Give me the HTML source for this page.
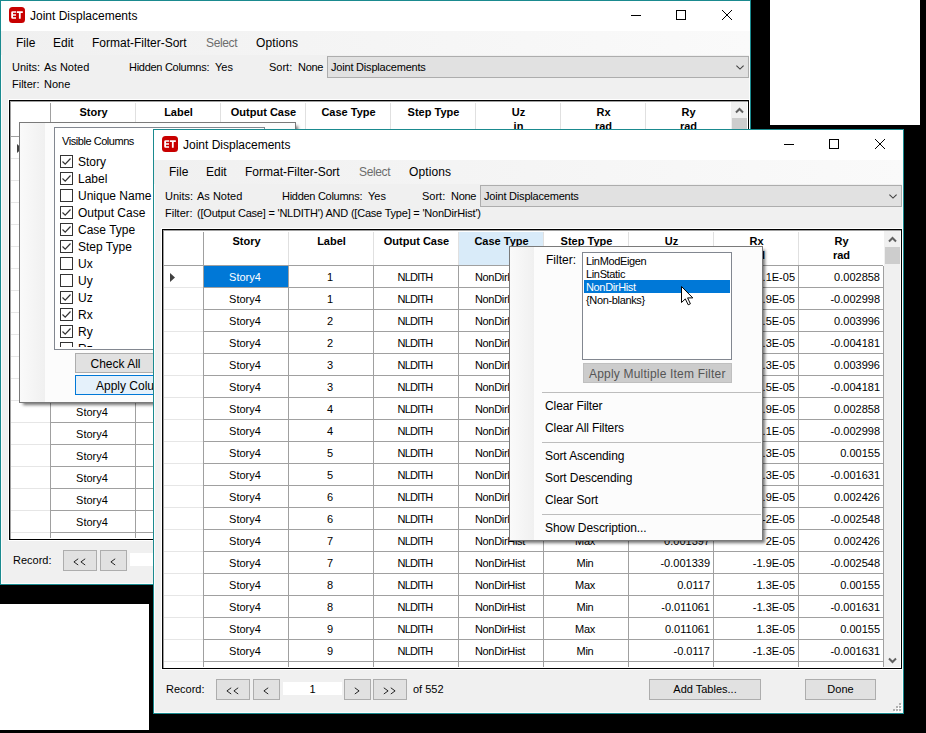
<!DOCTYPE html><html><head><meta charset="utf-8"><style>html,body{margin:0;padding:0;width:926px;height:733px;overflow:hidden;background:#000}body>div,body>svg{position:absolute}body{font-family:"Liberation Sans",sans-serif;position:relative}</style></head><body>
<div style="left:770px;top:0px;width:150px;height:125px;background:#fff"></div>
<div style="left:0px;top:604px;width:149px;height:126px;background:#fff"></div>
<div style="left:0px;top:0px;width:751px;height:585px;box-sizing:border-box;border:1px solid #1a8a8f;background:#f0f0f0"></div>
<div style="left:1px;top:1px;width:1px;height:583px;background:#fcfcfc"></div>
<div style="left:749px;top:1px;width:1px;height:583px;background:#fcfcfc"></div>
<div style="left:1px;top:583px;width:749px;height:1px;background:#fcfcfc"></div>
<div style="left:1px;top:1px;width:749px;height:30px;background:#fff"></div>
<svg style="left:9px;top:7px" width="16" height="16" viewBox="0 0 16 16"><rect x="0" y="0" width="16" height="16" rx="3.5" fill="#c80000"/><path d="M7 4.2H3.6Q2.2 4.2 2.2 5.6V10.4Q2.2 11.8 3.6 11.8H7V10.2H4V8.8H7V7.3H4V5.8H7Z" fill="#fff"/><path d="M7.8 4.2H13.8V5.9H11.7V11.8H9.9V5.9H7.8Z" fill="#fff"/></svg>
<div style="top:6px;font-size:12px;line-height:20px;color:#000;white-space:pre;left:30px;">Joint Displacements</div>
<div style="left:631px;top:15px;width:10px;height:1px;background:#000"></div>
<div style="left:676px;top:10px;width:8px;height:8px;border:1px solid #000"></div>
<svg style="left:721px;top:9px" width="12" height="12" viewBox="0 0 12 12"><path d="M1 1L11 11M11 1L1 11" stroke="#000" stroke-width="1"/></svg>
<div style="left:1px;top:31px;width:749px;height:24px;background:linear-gradient(to right,#f0f0f0,#fafafa)"></div>
<div style="top:33px;font-size:12px;line-height:20px;color:#000;white-space:pre;left:16px;">File</div>
<div style="top:33px;font-size:12px;line-height:20px;color:#000;white-space:pre;left:53px;">Edit</div>
<div style="top:33px;font-size:12px;line-height:20px;color:#000;white-space:pre;left:92px;">Format-Filter-Sort</div>
<div style="top:33px;font-size:12px;line-height:20px;color:#6d6d6d;white-space:pre;letter-spacing:-0.35px;left:206px;">Select</div>
<div style="top:33px;font-size:12px;line-height:20px;color:#000;white-space:pre;letter-spacing:0.1px;left:256px;">Options</div>
<div style="top:57px;font-size:11px;line-height:20px;color:#000;white-space:pre;left:12px;">Units:</div>
<div style="top:57px;font-size:11px;line-height:20px;color:#000;white-space:pre;left:44px;">As Noted</div>
<div style="top:57px;font-size:11px;line-height:20px;color:#000;white-space:pre;letter-spacing:-0.28px;left:129px;">Hidden Columns:</div>
<div style="top:57px;font-size:11px;line-height:20px;color:#000;white-space:pre;left:215px;">Yes</div>
<div style="top:57px;font-size:11px;line-height:20px;color:#000;white-space:pre;left:269px;">Sort:</div>
<div style="top:57px;font-size:11px;line-height:20px;color:#000;white-space:pre;letter-spacing:-0.3px;left:298px;">None</div>
<div style="left:327px;top:56px;width:422px;height:22px;box-sizing:border-box;border:1px solid #adadad;background:#e1e1e1"></div>
<div style="top:57px;font-size:11px;line-height:20px;color:#000;white-space:pre;letter-spacing:-0.2px;left:331px;">Joint Displacements</div>
<svg style="left:736px;top:65px" width="8" height="5" viewBox="0 0 8 5"><path d="M0.4 0.6L4 4.1L7.6 0.6" fill="none" stroke="#404040" stroke-width="1.1"/></svg>
<div style="top:74px;font-size:11px;line-height:20px;color:#000;white-space:pre;left:12px;">Filter:</div>
<div style="top:74px;font-size:11px;line-height:20px;color:#000;white-space:pre;left:44px;">None</div>
<div style="left:8px;top:99px;width:742px;height:442px;background:#fff"></div>
<div style="left:9px;top:100px;width:740px;height:440px;box-sizing:border-box;border:1px solid #000;background:#fff"></div>
<div style="left:10px;top:101px;width:738px;height:1px;background:#a0a0a0"></div>
<div style="left:10px;top:101px;width:1px;height:438px;background:#a0a0a0"></div>
<div style="left:50px;top:103px;width:1px;height:33px;background:#a0a0a0"></div>
<div style="left:135px;top:103px;width:1px;height:33px;background:#e0e0e0"></div>
<div style="left:220px;top:103px;width:1px;height:33px;background:#e0e0e0"></div>
<div style="left:305px;top:103px;width:1px;height:33px;background:#e0e0e0"></div>
<div style="left:390px;top:103px;width:1px;height:33px;background:#e0e0e0"></div>
<div style="left:475px;top:103px;width:1px;height:33px;background:#e0e0e0"></div>
<div style="left:560px;top:103px;width:1px;height:33px;background:#e0e0e0"></div>
<div style="left:645px;top:103px;width:1px;height:33px;background:#e0e0e0"></div>
<div style="left:730px;top:103px;width:1px;height:33px;background:#e0e0e0"></div>
<div style="left:10px;top:136px;width:720px;height:1px;background:#a0a0a0"></div>
<div style="top:102px;font-size:11px;line-height:20px;color:#000;white-space:pre;font-weight:bold;left:51.5px;width:84px;text-align:center;">Story</div>
<div style="top:102px;font-size:11px;line-height:20px;color:#000;white-space:pre;font-weight:bold;left:136.5px;width:84px;text-align:center;">Label</div>
<div style="top:102px;font-size:11px;line-height:20px;color:#000;white-space:pre;font-weight:bold;left:221.5px;width:84px;text-align:center;">Output Case</div>
<div style="top:102px;font-size:11px;line-height:20px;color:#000;white-space:pre;font-weight:bold;left:306.5px;width:84px;text-align:center;">Case Type</div>
<div style="top:102px;font-size:11px;line-height:20px;color:#000;white-space:pre;font-weight:bold;left:391.5px;width:84px;text-align:center;">Step Type</div>
<div style="top:102px;font-size:11px;line-height:20px;color:#000;white-space:pre;font-weight:bold;left:476.5px;width:84px;text-align:center;">Uz</div>
<div style="top:116px;font-size:11px;line-height:20px;color:#000;white-space:pre;font-weight:bold;left:476.5px;width:84px;text-align:center;">in</div>
<div style="top:102px;font-size:11px;line-height:20px;color:#000;white-space:pre;font-weight:bold;left:561.5px;width:84px;text-align:center;">Rx</div>
<div style="top:116px;font-size:11px;line-height:20px;color:#000;white-space:pre;font-weight:bold;left:561.5px;width:84px;text-align:center;">rad</div>
<div style="top:102px;font-size:11px;line-height:20px;color:#000;white-space:pre;font-weight:bold;left:646.5px;width:84px;text-align:center;">Ry</div>
<div style="top:116px;font-size:11px;line-height:20px;color:#000;white-space:pre;font-weight:bold;left:646.5px;width:84px;text-align:center;">rad</div>
<div style="left:11px;top:158px;width:39px;height:1px;background:#e6e6e6"></div>
<div style="left:51px;top:158px;width:679px;height:1px;background:#a0a0a0"></div>
<div style="left:11px;top:180px;width:39px;height:1px;background:#e6e6e6"></div>
<div style="left:51px;top:180px;width:679px;height:1px;background:#a0a0a0"></div>
<div style="left:11px;top:202px;width:39px;height:1px;background:#e6e6e6"></div>
<div style="left:51px;top:202px;width:679px;height:1px;background:#a0a0a0"></div>
<div style="left:11px;top:224px;width:39px;height:1px;background:#e6e6e6"></div>
<div style="left:51px;top:224px;width:679px;height:1px;background:#a0a0a0"></div>
<div style="left:11px;top:246px;width:39px;height:1px;background:#e6e6e6"></div>
<div style="left:51px;top:246px;width:679px;height:1px;background:#a0a0a0"></div>
<div style="left:11px;top:268px;width:39px;height:1px;background:#e6e6e6"></div>
<div style="left:51px;top:268px;width:679px;height:1px;background:#a0a0a0"></div>
<div style="left:11px;top:290px;width:39px;height:1px;background:#e6e6e6"></div>
<div style="left:51px;top:290px;width:679px;height:1px;background:#a0a0a0"></div>
<div style="left:11px;top:312px;width:39px;height:1px;background:#e6e6e6"></div>
<div style="left:51px;top:312px;width:679px;height:1px;background:#a0a0a0"></div>
<div style="left:11px;top:334px;width:39px;height:1px;background:#e6e6e6"></div>
<div style="left:51px;top:334px;width:679px;height:1px;background:#a0a0a0"></div>
<div style="left:11px;top:356px;width:39px;height:1px;background:#e6e6e6"></div>
<div style="left:51px;top:356px;width:679px;height:1px;background:#a0a0a0"></div>
<div style="left:11px;top:378px;width:39px;height:1px;background:#e6e6e6"></div>
<div style="left:51px;top:378px;width:679px;height:1px;background:#a0a0a0"></div>
<div style="left:11px;top:400px;width:39px;height:1px;background:#e6e6e6"></div>
<div style="left:51px;top:400px;width:679px;height:1px;background:#a0a0a0"></div>
<div style="left:11px;top:422px;width:39px;height:1px;background:#e6e6e6"></div>
<div style="left:51px;top:422px;width:679px;height:1px;background:#a0a0a0"></div>
<div style="left:11px;top:444px;width:39px;height:1px;background:#e6e6e6"></div>
<div style="left:51px;top:444px;width:679px;height:1px;background:#a0a0a0"></div>
<div style="left:11px;top:466px;width:39px;height:1px;background:#e6e6e6"></div>
<div style="left:51px;top:466px;width:679px;height:1px;background:#a0a0a0"></div>
<div style="left:11px;top:488px;width:39px;height:1px;background:#e6e6e6"></div>
<div style="left:51px;top:488px;width:679px;height:1px;background:#a0a0a0"></div>
<div style="left:11px;top:510px;width:39px;height:1px;background:#e6e6e6"></div>
<div style="left:51px;top:510px;width:679px;height:1px;background:#a0a0a0"></div>
<div style="left:11px;top:532px;width:39px;height:1px;background:#e6e6e6"></div>
<div style="left:51px;top:532px;width:679px;height:1px;background:#a0a0a0"></div>
<div style="left:50px;top:137px;width:1px;height:401px;background:#a0a0a0"></div>
<div style="left:135px;top:137px;width:1px;height:401px;background:#a0a0a0"></div>
<div style="left:220px;top:137px;width:1px;height:401px;background:#a0a0a0"></div>
<div style="left:305px;top:137px;width:1px;height:401px;background:#a0a0a0"></div>
<div style="left:390px;top:137px;width:1px;height:401px;background:#a0a0a0"></div>
<div style="left:475px;top:137px;width:1px;height:401px;background:#a0a0a0"></div>
<div style="left:560px;top:137px;width:1px;height:401px;background:#a0a0a0"></div>
<div style="left:645px;top:137px;width:1px;height:401px;background:#a0a0a0"></div>
<div style="left:730px;top:137px;width:1px;height:401px;background:#a0a0a0"></div>
<div style="left:731px;top:102px;width:16px;height:436px;background:#f0f0f0"></div>
<div style="left:730px;top:102px;width:1px;height:34px;background:#fff"></div>
<div style="left:732px;top:118px;width:15px;height:17px;background:#cdcdcd"></div>
<svg style="left:735px;top:107px" width="9" height="7" viewBox="0 0 9 7"><path d="M1 5.5L4.5 2L8 5.5" fill="none" stroke="#606060" stroke-width="2"/></svg>
<svg style="left:735px;top:528px" width="9" height="7" viewBox="0 0 9 7"><path d="M1 1.5L4.5 5L8 1.5" fill="none" stroke="#606060" stroke-width="2"/></svg>
<svg style="left:17px;top:144px" width="6" height="10" viewBox="0 0 6 10"><path d="M0 0L5 4.5L0 9Z" fill="#404040"/></svg>
<div style="top:138px;font-size:11px;line-height:20px;color:#000;white-space:pre;left:50.0px;width:84px;text-align:center;">Story4</div>
<div style="top:138px;font-size:11px;line-height:20px;color:#000;white-space:pre;left:135.0px;width:84px;text-align:center;">1</div>
<div style="top:138px;font-size:11px;line-height:20px;color:#000;white-space:pre;letter-spacing:-0.8px;left:220.0px;width:84px;text-align:center;">NLDITH</div>
<div style="top:138px;font-size:11px;line-height:20px;color:#000;white-space:pre;letter-spacing:-0.3px;left:305.0px;width:84px;text-align:center;">NonDirHist</div>
<div style="top:138px;font-size:11px;line-height:20px;color:#000;white-space:pre;letter-spacing:-0.3px;left:390.0px;width:84px;text-align:center;">Max</div>
<div style="top:138px;font-size:11px;line-height:20px;color:#000;white-space:pre;left:473px;width:84px;text-align:right;">0.001397</div>
<div style="top:138px;font-size:11px;line-height:20px;color:#000;white-space:pre;left:558px;width:84px;text-align:right;">1.1E-05</div>
<div style="top:138px;font-size:11px;line-height:20px;color:#000;white-space:pre;left:643px;width:84px;text-align:right;">0.002858</div>
<div style="top:160px;font-size:11px;line-height:20px;color:#000;white-space:pre;left:50.0px;width:84px;text-align:center;">Story4</div>
<div style="top:160px;font-size:11px;line-height:20px;color:#000;white-space:pre;left:135.0px;width:84px;text-align:center;">1</div>
<div style="top:160px;font-size:11px;line-height:20px;color:#000;white-space:pre;letter-spacing:-0.8px;left:220.0px;width:84px;text-align:center;">NLDITH</div>
<div style="top:160px;font-size:11px;line-height:20px;color:#000;white-space:pre;letter-spacing:-0.3px;left:305.0px;width:84px;text-align:center;">NonDirHist</div>
<div style="top:160px;font-size:11px;line-height:20px;color:#000;white-space:pre;letter-spacing:-0.3px;left:390.0px;width:84px;text-align:center;">Min</div>
<div style="top:160px;font-size:11px;line-height:20px;color:#000;white-space:pre;left:473px;width:84px;text-align:right;">-0.001339</div>
<div style="top:160px;font-size:11px;line-height:20px;color:#000;white-space:pre;left:558px;width:84px;text-align:right;">-1.9E-05</div>
<div style="top:160px;font-size:11px;line-height:20px;color:#000;white-space:pre;left:643px;width:84px;text-align:right;">-0.002998</div>
<div style="top:182px;font-size:11px;line-height:20px;color:#000;white-space:pre;left:50.0px;width:84px;text-align:center;">Story4</div>
<div style="top:182px;font-size:11px;line-height:20px;color:#000;white-space:pre;left:135.0px;width:84px;text-align:center;">2</div>
<div style="top:182px;font-size:11px;line-height:20px;color:#000;white-space:pre;letter-spacing:-0.8px;left:220.0px;width:84px;text-align:center;">NLDITH</div>
<div style="top:182px;font-size:11px;line-height:20px;color:#000;white-space:pre;letter-spacing:-0.3px;left:305.0px;width:84px;text-align:center;">NonDirHist</div>
<div style="top:182px;font-size:11px;line-height:20px;color:#000;white-space:pre;letter-spacing:-0.3px;left:390.0px;width:84px;text-align:center;">Max</div>
<div style="top:182px;font-size:11px;line-height:20px;color:#000;white-space:pre;left:473px;width:84px;text-align:right;">0.003996</div>
<div style="top:182px;font-size:11px;line-height:20px;color:#000;white-space:pre;left:558px;width:84px;text-align:right;">1.5E-05</div>
<div style="top:182px;font-size:11px;line-height:20px;color:#000;white-space:pre;left:643px;width:84px;text-align:right;">0.003996</div>
<div style="top:204px;font-size:11px;line-height:20px;color:#000;white-space:pre;left:50.0px;width:84px;text-align:center;">Story4</div>
<div style="top:204px;font-size:11px;line-height:20px;color:#000;white-space:pre;left:135.0px;width:84px;text-align:center;">2</div>
<div style="top:204px;font-size:11px;line-height:20px;color:#000;white-space:pre;letter-spacing:-0.8px;left:220.0px;width:84px;text-align:center;">NLDITH</div>
<div style="top:204px;font-size:11px;line-height:20px;color:#000;white-space:pre;letter-spacing:-0.3px;left:305.0px;width:84px;text-align:center;">NonDirHist</div>
<div style="top:204px;font-size:11px;line-height:20px;color:#000;white-space:pre;letter-spacing:-0.3px;left:390.0px;width:84px;text-align:center;">Min</div>
<div style="top:204px;font-size:11px;line-height:20px;color:#000;white-space:pre;left:473px;width:84px;text-align:right;">-0.004181</div>
<div style="top:204px;font-size:11px;line-height:20px;color:#000;white-space:pre;left:558px;width:84px;text-align:right;">-1.3E-05</div>
<div style="top:204px;font-size:11px;line-height:20px;color:#000;white-space:pre;left:643px;width:84px;text-align:right;">-0.004181</div>
<div style="top:226px;font-size:11px;line-height:20px;color:#000;white-space:pre;left:50.0px;width:84px;text-align:center;">Story4</div>
<div style="top:226px;font-size:11px;line-height:20px;color:#000;white-space:pre;left:135.0px;width:84px;text-align:center;">3</div>
<div style="top:226px;font-size:11px;line-height:20px;color:#000;white-space:pre;letter-spacing:-0.8px;left:220.0px;width:84px;text-align:center;">NLDITH</div>
<div style="top:226px;font-size:11px;line-height:20px;color:#000;white-space:pre;letter-spacing:-0.3px;left:305.0px;width:84px;text-align:center;">NonDirHist</div>
<div style="top:226px;font-size:11px;line-height:20px;color:#000;white-space:pre;letter-spacing:-0.3px;left:390.0px;width:84px;text-align:center;">Max</div>
<div style="top:226px;font-size:11px;line-height:20px;color:#000;white-space:pre;left:473px;width:84px;text-align:right;">0.003996</div>
<div style="top:226px;font-size:11px;line-height:20px;color:#000;white-space:pre;left:558px;width:84px;text-align:right;">1.3E-05</div>
<div style="top:226px;font-size:11px;line-height:20px;color:#000;white-space:pre;left:643px;width:84px;text-align:right;">0.003996</div>
<div style="top:248px;font-size:11px;line-height:20px;color:#000;white-space:pre;left:50.0px;width:84px;text-align:center;">Story4</div>
<div style="top:248px;font-size:11px;line-height:20px;color:#000;white-space:pre;left:135.0px;width:84px;text-align:center;">3</div>
<div style="top:248px;font-size:11px;line-height:20px;color:#000;white-space:pre;letter-spacing:-0.8px;left:220.0px;width:84px;text-align:center;">NLDITH</div>
<div style="top:248px;font-size:11px;line-height:20px;color:#000;white-space:pre;letter-spacing:-0.3px;left:305.0px;width:84px;text-align:center;">NonDirHist</div>
<div style="top:248px;font-size:11px;line-height:20px;color:#000;white-space:pre;letter-spacing:-0.3px;left:390.0px;width:84px;text-align:center;">Min</div>
<div style="top:248px;font-size:11px;line-height:20px;color:#000;white-space:pre;left:473px;width:84px;text-align:right;">-0.004181</div>
<div style="top:248px;font-size:11px;line-height:20px;color:#000;white-space:pre;left:558px;width:84px;text-align:right;">-1.5E-05</div>
<div style="top:248px;font-size:11px;line-height:20px;color:#000;white-space:pre;left:643px;width:84px;text-align:right;">-0.004181</div>
<div style="top:270px;font-size:11px;line-height:20px;color:#000;white-space:pre;left:50.0px;width:84px;text-align:center;">Story4</div>
<div style="top:270px;font-size:11px;line-height:20px;color:#000;white-space:pre;left:135.0px;width:84px;text-align:center;">4</div>
<div style="top:270px;font-size:11px;line-height:20px;color:#000;white-space:pre;letter-spacing:-0.8px;left:220.0px;width:84px;text-align:center;">NLDITH</div>
<div style="top:270px;font-size:11px;line-height:20px;color:#000;white-space:pre;letter-spacing:-0.3px;left:305.0px;width:84px;text-align:center;">NonDirHist</div>
<div style="top:270px;font-size:11px;line-height:20px;color:#000;white-space:pre;letter-spacing:-0.3px;left:390.0px;width:84px;text-align:center;">Max</div>
<div style="top:270px;font-size:11px;line-height:20px;color:#000;white-space:pre;left:473px;width:84px;text-align:right;">0.002858</div>
<div style="top:270px;font-size:11px;line-height:20px;color:#000;white-space:pre;left:558px;width:84px;text-align:right;">1.9E-05</div>
<div style="top:270px;font-size:11px;line-height:20px;color:#000;white-space:pre;left:643px;width:84px;text-align:right;">0.002858</div>
<div style="top:292px;font-size:11px;line-height:20px;color:#000;white-space:pre;left:50.0px;width:84px;text-align:center;">Story4</div>
<div style="top:292px;font-size:11px;line-height:20px;color:#000;white-space:pre;left:135.0px;width:84px;text-align:center;">4</div>
<div style="top:292px;font-size:11px;line-height:20px;color:#000;white-space:pre;letter-spacing:-0.8px;left:220.0px;width:84px;text-align:center;">NLDITH</div>
<div style="top:292px;font-size:11px;line-height:20px;color:#000;white-space:pre;letter-spacing:-0.3px;left:305.0px;width:84px;text-align:center;">NonDirHist</div>
<div style="top:292px;font-size:11px;line-height:20px;color:#000;white-space:pre;letter-spacing:-0.3px;left:390.0px;width:84px;text-align:center;">Min</div>
<div style="top:292px;font-size:11px;line-height:20px;color:#000;white-space:pre;left:473px;width:84px;text-align:right;">-0.002998</div>
<div style="top:292px;font-size:11px;line-height:20px;color:#000;white-space:pre;left:558px;width:84px;text-align:right;">-1.1E-05</div>
<div style="top:292px;font-size:11px;line-height:20px;color:#000;white-space:pre;left:643px;width:84px;text-align:right;">-0.002998</div>
<div style="top:314px;font-size:11px;line-height:20px;color:#000;white-space:pre;left:50.0px;width:84px;text-align:center;">Story4</div>
<div style="top:314px;font-size:11px;line-height:20px;color:#000;white-space:pre;left:135.0px;width:84px;text-align:center;">5</div>
<div style="top:314px;font-size:11px;line-height:20px;color:#000;white-space:pre;letter-spacing:-0.8px;left:220.0px;width:84px;text-align:center;">NLDITH</div>
<div style="top:314px;font-size:11px;line-height:20px;color:#000;white-space:pre;letter-spacing:-0.3px;left:305.0px;width:84px;text-align:center;">NonDirHist</div>
<div style="top:314px;font-size:11px;line-height:20px;color:#000;white-space:pre;letter-spacing:-0.3px;left:390.0px;width:84px;text-align:center;">Max</div>
<div style="top:314px;font-size:11px;line-height:20px;color:#000;white-space:pre;left:473px;width:84px;text-align:right;">0.00155</div>
<div style="top:314px;font-size:11px;line-height:20px;color:#000;white-space:pre;left:558px;width:84px;text-align:right;">1.3E-05</div>
<div style="top:314px;font-size:11px;line-height:20px;color:#000;white-space:pre;left:643px;width:84px;text-align:right;">0.00155</div>
<div style="top:336px;font-size:11px;line-height:20px;color:#000;white-space:pre;left:50.0px;width:84px;text-align:center;">Story4</div>
<div style="top:336px;font-size:11px;line-height:20px;color:#000;white-space:pre;left:135.0px;width:84px;text-align:center;">5</div>
<div style="top:336px;font-size:11px;line-height:20px;color:#000;white-space:pre;letter-spacing:-0.8px;left:220.0px;width:84px;text-align:center;">NLDITH</div>
<div style="top:336px;font-size:11px;line-height:20px;color:#000;white-space:pre;letter-spacing:-0.3px;left:305.0px;width:84px;text-align:center;">NonDirHist</div>
<div style="top:336px;font-size:11px;line-height:20px;color:#000;white-space:pre;letter-spacing:-0.3px;left:390.0px;width:84px;text-align:center;">Min</div>
<div style="top:336px;font-size:11px;line-height:20px;color:#000;white-space:pre;left:473px;width:84px;text-align:right;">-0.001631</div>
<div style="top:336px;font-size:11px;line-height:20px;color:#000;white-space:pre;left:558px;width:84px;text-align:right;">-1.3E-05</div>
<div style="top:336px;font-size:11px;line-height:20px;color:#000;white-space:pre;left:643px;width:84px;text-align:right;">-0.001631</div>
<div style="top:358px;font-size:11px;line-height:20px;color:#000;white-space:pre;left:50.0px;width:84px;text-align:center;">Story4</div>
<div style="top:358px;font-size:11px;line-height:20px;color:#000;white-space:pre;left:135.0px;width:84px;text-align:center;">6</div>
<div style="top:358px;font-size:11px;line-height:20px;color:#000;white-space:pre;letter-spacing:-0.8px;left:220.0px;width:84px;text-align:center;">NLDITH</div>
<div style="top:358px;font-size:11px;line-height:20px;color:#000;white-space:pre;letter-spacing:-0.3px;left:305.0px;width:84px;text-align:center;">NonDirHist</div>
<div style="top:358px;font-size:11px;line-height:20px;color:#000;white-space:pre;letter-spacing:-0.3px;left:390.0px;width:84px;text-align:center;">Max</div>
<div style="top:358px;font-size:11px;line-height:20px;color:#000;white-space:pre;left:473px;width:84px;text-align:right;">0.002426</div>
<div style="top:358px;font-size:11px;line-height:20px;color:#000;white-space:pre;left:558px;width:84px;text-align:right;">1.9E-05</div>
<div style="top:358px;font-size:11px;line-height:20px;color:#000;white-space:pre;left:643px;width:84px;text-align:right;">0.002426</div>
<div style="top:380px;font-size:11px;line-height:20px;color:#000;white-space:pre;left:50.0px;width:84px;text-align:center;">Story4</div>
<div style="top:380px;font-size:11px;line-height:20px;color:#000;white-space:pre;left:135.0px;width:84px;text-align:center;">6</div>
<div style="top:380px;font-size:11px;line-height:20px;color:#000;white-space:pre;letter-spacing:-0.8px;left:220.0px;width:84px;text-align:center;">NLDITH</div>
<div style="top:380px;font-size:11px;line-height:20px;color:#000;white-space:pre;letter-spacing:-0.3px;left:305.0px;width:84px;text-align:center;">NonDirHist</div>
<div style="top:380px;font-size:11px;line-height:20px;color:#000;white-space:pre;letter-spacing:-0.3px;left:390.0px;width:84px;text-align:center;">Min</div>
<div style="top:380px;font-size:11px;line-height:20px;color:#000;white-space:pre;left:473px;width:84px;text-align:right;">-0.002548</div>
<div style="top:380px;font-size:11px;line-height:20px;color:#000;white-space:pre;left:558px;width:84px;text-align:right;">-2E-05</div>
<div style="top:380px;font-size:11px;line-height:20px;color:#000;white-space:pre;left:643px;width:84px;text-align:right;">-0.002548</div>
<div style="top:402px;font-size:11px;line-height:20px;color:#000;white-space:pre;left:50.0px;width:84px;text-align:center;">Story4</div>
<div style="top:402px;font-size:11px;line-height:20px;color:#000;white-space:pre;left:135.0px;width:84px;text-align:center;">7</div>
<div style="top:402px;font-size:11px;line-height:20px;color:#000;white-space:pre;letter-spacing:-0.8px;left:220.0px;width:84px;text-align:center;">NLDITH</div>
<div style="top:402px;font-size:11px;line-height:20px;color:#000;white-space:pre;letter-spacing:-0.3px;left:305.0px;width:84px;text-align:center;">NonDirHist</div>
<div style="top:402px;font-size:11px;line-height:20px;color:#000;white-space:pre;letter-spacing:-0.3px;left:390.0px;width:84px;text-align:center;">Max</div>
<div style="top:402px;font-size:11px;line-height:20px;color:#000;white-space:pre;left:473px;width:84px;text-align:right;">0.001397</div>
<div style="top:402px;font-size:11px;line-height:20px;color:#000;white-space:pre;left:558px;width:84px;text-align:right;">2E-05</div>
<div style="top:402px;font-size:11px;line-height:20px;color:#000;white-space:pre;left:643px;width:84px;text-align:right;">0.002426</div>
<div style="top:424px;font-size:11px;line-height:20px;color:#000;white-space:pre;left:50.0px;width:84px;text-align:center;">Story4</div>
<div style="top:424px;font-size:11px;line-height:20px;color:#000;white-space:pre;left:135.0px;width:84px;text-align:center;">7</div>
<div style="top:424px;font-size:11px;line-height:20px;color:#000;white-space:pre;letter-spacing:-0.8px;left:220.0px;width:84px;text-align:center;">NLDITH</div>
<div style="top:424px;font-size:11px;line-height:20px;color:#000;white-space:pre;letter-spacing:-0.3px;left:305.0px;width:84px;text-align:center;">NonDirHist</div>
<div style="top:424px;font-size:11px;line-height:20px;color:#000;white-space:pre;letter-spacing:-0.3px;left:390.0px;width:84px;text-align:center;">Min</div>
<div style="top:424px;font-size:11px;line-height:20px;color:#000;white-space:pre;left:473px;width:84px;text-align:right;">-0.001339</div>
<div style="top:424px;font-size:11px;line-height:20px;color:#000;white-space:pre;left:558px;width:84px;text-align:right;">-1.9E-05</div>
<div style="top:424px;font-size:11px;line-height:20px;color:#000;white-space:pre;left:643px;width:84px;text-align:right;">-0.002548</div>
<div style="top:446px;font-size:11px;line-height:20px;color:#000;white-space:pre;left:50.0px;width:84px;text-align:center;">Story4</div>
<div style="top:446px;font-size:11px;line-height:20px;color:#000;white-space:pre;left:135.0px;width:84px;text-align:center;">8</div>
<div style="top:446px;font-size:11px;line-height:20px;color:#000;white-space:pre;letter-spacing:-0.8px;left:220.0px;width:84px;text-align:center;">NLDITH</div>
<div style="top:446px;font-size:11px;line-height:20px;color:#000;white-space:pre;letter-spacing:-0.3px;left:305.0px;width:84px;text-align:center;">NonDirHist</div>
<div style="top:446px;font-size:11px;line-height:20px;color:#000;white-space:pre;letter-spacing:-0.3px;left:390.0px;width:84px;text-align:center;">Max</div>
<div style="top:446px;font-size:11px;line-height:20px;color:#000;white-space:pre;left:473px;width:84px;text-align:right;">0.0117</div>
<div style="top:446px;font-size:11px;line-height:20px;color:#000;white-space:pre;left:558px;width:84px;text-align:right;">1.3E-05</div>
<div style="top:446px;font-size:11px;line-height:20px;color:#000;white-space:pre;left:643px;width:84px;text-align:right;">0.00155</div>
<div style="top:468px;font-size:11px;line-height:20px;color:#000;white-space:pre;left:50.0px;width:84px;text-align:center;">Story4</div>
<div style="top:468px;font-size:11px;line-height:20px;color:#000;white-space:pre;left:135.0px;width:84px;text-align:center;">8</div>
<div style="top:468px;font-size:11px;line-height:20px;color:#000;white-space:pre;letter-spacing:-0.8px;left:220.0px;width:84px;text-align:center;">NLDITH</div>
<div style="top:468px;font-size:11px;line-height:20px;color:#000;white-space:pre;letter-spacing:-0.3px;left:305.0px;width:84px;text-align:center;">NonDirHist</div>
<div style="top:468px;font-size:11px;line-height:20px;color:#000;white-space:pre;letter-spacing:-0.3px;left:390.0px;width:84px;text-align:center;">Min</div>
<div style="top:468px;font-size:11px;line-height:20px;color:#000;white-space:pre;left:473px;width:84px;text-align:right;">-0.011061</div>
<div style="top:468px;font-size:11px;line-height:20px;color:#000;white-space:pre;left:558px;width:84px;text-align:right;">-1.3E-05</div>
<div style="top:468px;font-size:11px;line-height:20px;color:#000;white-space:pre;left:643px;width:84px;text-align:right;">-0.001631</div>
<div style="top:490px;font-size:11px;line-height:20px;color:#000;white-space:pre;left:50.0px;width:84px;text-align:center;">Story4</div>
<div style="top:490px;font-size:11px;line-height:20px;color:#000;white-space:pre;left:135.0px;width:84px;text-align:center;">9</div>
<div style="top:490px;font-size:11px;line-height:20px;color:#000;white-space:pre;letter-spacing:-0.8px;left:220.0px;width:84px;text-align:center;">NLDITH</div>
<div style="top:490px;font-size:11px;line-height:20px;color:#000;white-space:pre;letter-spacing:-0.3px;left:305.0px;width:84px;text-align:center;">NonDirHist</div>
<div style="top:490px;font-size:11px;line-height:20px;color:#000;white-space:pre;letter-spacing:-0.3px;left:390.0px;width:84px;text-align:center;">Max</div>
<div style="top:490px;font-size:11px;line-height:20px;color:#000;white-space:pre;left:473px;width:84px;text-align:right;">0.011061</div>
<div style="top:490px;font-size:11px;line-height:20px;color:#000;white-space:pre;left:558px;width:84px;text-align:right;">1.3E-05</div>
<div style="top:490px;font-size:11px;line-height:20px;color:#000;white-space:pre;left:643px;width:84px;text-align:right;">0.00155</div>
<div style="top:512px;font-size:11px;line-height:20px;color:#000;white-space:pre;left:50.0px;width:84px;text-align:center;">Story4</div>
<div style="top:512px;font-size:11px;line-height:20px;color:#000;white-space:pre;left:135.0px;width:84px;text-align:center;">9</div>
<div style="top:512px;font-size:11px;line-height:20px;color:#000;white-space:pre;letter-spacing:-0.8px;left:220.0px;width:84px;text-align:center;">NLDITH</div>
<div style="top:512px;font-size:11px;line-height:20px;color:#000;white-space:pre;letter-spacing:-0.3px;left:305.0px;width:84px;text-align:center;">NonDirHist</div>
<div style="top:512px;font-size:11px;line-height:20px;color:#000;white-space:pre;letter-spacing:-0.3px;left:390.0px;width:84px;text-align:center;">Min</div>
<div style="top:512px;font-size:11px;line-height:20px;color:#000;white-space:pre;left:473px;width:84px;text-align:right;">-0.0117</div>
<div style="top:512px;font-size:11px;line-height:20px;color:#000;white-space:pre;left:558px;width:84px;text-align:right;">-1.3E-05</div>
<div style="top:512px;font-size:11px;line-height:20px;color:#000;white-space:pre;left:643px;width:84px;text-align:right;">-0.001631</div>
<div style="top:550px;font-size:11px;line-height:20px;color:#000;white-space:pre;left:13px;">Record:</div>
<div style="left:63px;top:550px;width:34px;height:21px;box-sizing:border-box;border:1px solid #adadad;background:#e1e1e1"></div>
<div style="top:550px;font-size:11px;line-height:20px;color:#000;white-space:pre;left:63.0px;width:34px;text-align:center;"></div>
<div style="left:100px;top:550px;width:27px;height:21px;box-sizing:border-box;border:1px solid #adadad;background:#e1e1e1"></div>
<div style="top:550px;font-size:11px;line-height:20px;color:#000;white-space:pre;left:100.0px;width:27px;text-align:center;"></div>
<svg style="left:73px;top:557.5px" width="6" height="8" viewBox="0 0 6 8"><path d="M5.2 0.8L0.9 3.9L5.2 7" fill="none" stroke="#1a1a1a" stroke-width="0.95"/></svg>
<svg style="left:79.5px;top:557.5px" width="6" height="8" viewBox="0 0 6 8"><path d="M5.2 0.8L0.9 3.9L5.2 7" fill="none" stroke="#1a1a1a" stroke-width="0.95"/></svg>
<svg style="left:110px;top:557.5px" width="6" height="8" viewBox="0 0 6 8"><path d="M5.2 0.8L0.9 3.9L5.2 7" fill="none" stroke="#1a1a1a" stroke-width="0.95"/></svg>
<div style="left:130px;top:553px;width:59px;height:13px;background:#fff"></div>
<div style="top:550px;font-size:11px;line-height:20px;color:#000;white-space:pre;left:130.0px;width:59px;text-align:center;"></div>
<div style="left:191px;top:550px;width:27px;height:21px;box-sizing:border-box;border:1px solid #adadad;background:#e1e1e1"></div>
<div style="top:550px;font-size:11px;line-height:20px;color:#000;white-space:pre;left:191.0px;width:27px;text-align:center;"></div>
<div style="left:220px;top:550px;width:34px;height:21px;box-sizing:border-box;border:1px solid #adadad;background:#e1e1e1"></div>
<div style="top:550px;font-size:11px;line-height:20px;color:#000;white-space:pre;left:220.0px;width:34px;text-align:center;"></div>
<svg style="left:201px;top:557.5px" width="6" height="8" viewBox="0 0 6 8"><path d="M0.8 0.8L5.1 3.9L0.8 7" fill="none" stroke="#1a1a1a" stroke-width="0.95"/></svg>
<svg style="left:230px;top:557.5px" width="6" height="8" viewBox="0 0 6 8"><path d="M0.8 0.8L5.1 3.9L0.8 7" fill="none" stroke="#1a1a1a" stroke-width="0.95"/></svg>
<svg style="left:236.5px;top:557.5px" width="6" height="8" viewBox="0 0 6 8"><path d="M0.8 0.8L5.1 3.9L0.8 7" fill="none" stroke="#1a1a1a" stroke-width="0.95"/></svg>
<div style="top:550px;font-size:11px;line-height:20px;color:#000;white-space:pre;left:260px;">of 552</div>
<div style="left:496px;top:550px;width:112px;height:21px;box-sizing:border-box;border:1px solid #adadad;background:#e1e1e1"></div>
<div style="top:550px;font-size:11px;line-height:20px;color:#000;white-space:pre;left:496.0px;width:112px;text-align:center;">Add Tables...</div>
<div style="left:652px;top:550px;width:71px;height:21px;box-sizing:border-box;border:1px solid #adadad;background:#e1e1e1"></div>
<div style="top:550px;font-size:11px;line-height:20px;color:#000;white-space:pre;left:652.0px;width:71px;text-align:center;">Done</div>
<div style="left:741px;top:581px;width:2px;height:2px;background:#fff"></div>
<div style="left:740px;top:580px;width:2px;height:2px;background:#b0b0b0"></div>
<div style="left:744px;top:581px;width:2px;height:2px;background:#fff"></div>
<div style="left:743px;top:580px;width:2px;height:2px;background:#b0b0b0"></div>
<div style="left:747px;top:581px;width:2px;height:2px;background:#fff"></div>
<div style="left:746px;top:580px;width:2px;height:2px;background:#b0b0b0"></div>
<div style="left:744px;top:578px;width:2px;height:2px;background:#fff"></div>
<div style="left:743px;top:577px;width:2px;height:2px;background:#b0b0b0"></div>
<div style="left:747px;top:578px;width:2px;height:2px;background:#fff"></div>
<div style="left:746px;top:577px;width:2px;height:2px;background:#b0b0b0"></div>
<div style="left:747px;top:575px;width:2px;height:2px;background:#fff"></div>
<div style="left:746px;top:574px;width:2px;height:2px;background:#b0b0b0"></div>
<div style="left:19px;top:122px;width:277px;height:281px;box-sizing:border-box;border:1px solid #7a7a7a;background:#fcfcfc;box-shadow:3px 3px 3px -1px rgba(0,0,0,0.55)"></div>
<div style="left:20px;top:123px;width:25px;height:279px;background:linear-gradient(to right,#fafafa,#f0f0f0)"></div>
<div style="left:54px;top:127px;width:211px;height:223px;box-sizing:border-box;border:1px solid #828790;background:#fff"></div>
<div style="top:131px;font-size:11px;line-height:20px;color:#000;white-space:pre;letter-spacing:-0.45px;left:62px;">Visible Columns</div>
<div style="left:55px;top:128px;width:209px;height:219px;overflow:hidden">
<div style="position:absolute;left:5px;top:27px;width:11px;height:11px;border:1px solid #333;background:#fff"></div>
<svg style="position:absolute;left:6px;top:28px" width="11" height="11" viewBox="0 0 11 11"><path d="M1.5 5.5L4.2 8.2L9.5 2.5" fill="none" stroke="#333" stroke-width="1.2"/></svg>
<div style="position:absolute;left:23px;top:24px;font-size:12px;line-height:20px;white-space:pre">Story</div>
<div style="position:absolute;left:5px;top:44px;width:11px;height:11px;border:1px solid #333;background:#fff"></div>
<svg style="position:absolute;left:6px;top:45px" width="11" height="11" viewBox="0 0 11 11"><path d="M1.5 5.5L4.2 8.2L9.5 2.5" fill="none" stroke="#333" stroke-width="1.2"/></svg>
<div style="position:absolute;left:23px;top:41px;font-size:12px;line-height:20px;white-space:pre">Label</div>
<div style="position:absolute;left:5px;top:61px;width:11px;height:11px;border:1px solid #333;background:#fff"></div>
<div style="position:absolute;left:23px;top:58px;font-size:12px;line-height:20px;white-space:pre">Unique Name</div>
<div style="position:absolute;left:5px;top:78px;width:11px;height:11px;border:1px solid #333;background:#fff"></div>
<svg style="position:absolute;left:6px;top:79px" width="11" height="11" viewBox="0 0 11 11"><path d="M1.5 5.5L4.2 8.2L9.5 2.5" fill="none" stroke="#333" stroke-width="1.2"/></svg>
<div style="position:absolute;left:23px;top:75px;font-size:12px;line-height:20px;white-space:pre">Output Case</div>
<div style="position:absolute;left:5px;top:95px;width:11px;height:11px;border:1px solid #333;background:#fff"></div>
<svg style="position:absolute;left:6px;top:96px" width="11" height="11" viewBox="0 0 11 11"><path d="M1.5 5.5L4.2 8.2L9.5 2.5" fill="none" stroke="#333" stroke-width="1.2"/></svg>
<div style="position:absolute;left:23px;top:92px;font-size:12px;line-height:20px;white-space:pre">Case Type</div>
<div style="position:absolute;left:5px;top:112px;width:11px;height:11px;border:1px solid #333;background:#fff"></div>
<svg style="position:absolute;left:6px;top:113px" width="11" height="11" viewBox="0 0 11 11"><path d="M1.5 5.5L4.2 8.2L9.5 2.5" fill="none" stroke="#333" stroke-width="1.2"/></svg>
<div style="position:absolute;left:23px;top:109px;font-size:12px;line-height:20px;white-space:pre">Step Type</div>
<div style="position:absolute;left:5px;top:129px;width:11px;height:11px;border:1px solid #333;background:#fff"></div>
<div style="position:absolute;left:23px;top:126px;font-size:12px;line-height:20px;white-space:pre">Ux</div>
<div style="position:absolute;left:5px;top:146px;width:11px;height:11px;border:1px solid #333;background:#fff"></div>
<div style="position:absolute;left:23px;top:143px;font-size:12px;line-height:20px;white-space:pre">Uy</div>
<div style="position:absolute;left:5px;top:163px;width:11px;height:11px;border:1px solid #333;background:#fff"></div>
<svg style="position:absolute;left:6px;top:164px" width="11" height="11" viewBox="0 0 11 11"><path d="M1.5 5.5L4.2 8.2L9.5 2.5" fill="none" stroke="#333" stroke-width="1.2"/></svg>
<div style="position:absolute;left:23px;top:160px;font-size:12px;line-height:20px;white-space:pre">Uz</div>
<div style="position:absolute;left:5px;top:180px;width:11px;height:11px;border:1px solid #333;background:#fff"></div>
<svg style="position:absolute;left:6px;top:181px" width="11" height="11" viewBox="0 0 11 11"><path d="M1.5 5.5L4.2 8.2L9.5 2.5" fill="none" stroke="#333" stroke-width="1.2"/></svg>
<div style="position:absolute;left:23px;top:177px;font-size:12px;line-height:20px;white-space:pre">Rx</div>
<div style="position:absolute;left:5px;top:197px;width:11px;height:11px;border:1px solid #333;background:#fff"></div>
<svg style="position:absolute;left:6px;top:198px" width="11" height="11" viewBox="0 0 11 11"><path d="M1.5 5.5L4.2 8.2L9.5 2.5" fill="none" stroke="#333" stroke-width="1.2"/></svg>
<div style="position:absolute;left:23px;top:194px;font-size:12px;line-height:20px;white-space:pre">Ry</div>
<div style="position:absolute;left:5px;top:214px;width:11px;height:11px;border:1px solid #333;background:#fff"></div>
<div style="position:absolute;left:23px;top:211px;font-size:12px;line-height:20px;white-space:pre">Rz</div>
</div>
<div style="left:75px;top:353px;width:120px;height:20px;box-sizing:border-box;border:1px solid #adadad;background:#e1e1e1"></div>
<div style="top:354px;font-size:12px;line-height:20px;color:#000;white-space:pre;left:75.5px;width:80px;text-align:center;">Check All</div>
<div style="left:75px;top:375px;width:120px;height:20px;box-sizing:border-box;border:1px solid #0078d7;background:#e5f1fb"></div>
<div style="top:376px;font-size:12px;line-height:20px;color:#000;white-space:pre;left:96px;">Apply Columns</div>
<div style="left:153px;top:129px;width:751px;height:585px;box-sizing:border-box;border:1px solid #1a8a8f;background:#f0f0f0"></div>
<div style="left:154px;top:130px;width:1px;height:583px;background:#fcfcfc"></div>
<div style="left:902px;top:130px;width:1px;height:583px;background:#fcfcfc"></div>
<div style="left:154px;top:712px;width:749px;height:1px;background:#fcfcfc"></div>
<div style="left:154px;top:130px;width:749px;height:30px;background:#fff"></div>
<svg style="left:162px;top:136px" width="16" height="16" viewBox="0 0 16 16"><rect x="0" y="0" width="16" height="16" rx="3.5" fill="#c80000"/><path d="M7 4.2H3.6Q2.2 4.2 2.2 5.6V10.4Q2.2 11.8 3.6 11.8H7V10.2H4V8.8H7V7.3H4V5.8H7Z" fill="#fff"/><path d="M7.8 4.2H13.8V5.9H11.7V11.8H9.9V5.9H7.8Z" fill="#fff"/></svg>
<div style="top:135px;font-size:12px;line-height:20px;color:#000;white-space:pre;left:183px;">Joint Displacements</div>
<div style="left:784px;top:144px;width:10px;height:1px;background:#000"></div>
<div style="left:829px;top:139px;width:8px;height:8px;border:1px solid #000"></div>
<svg style="left:874px;top:138px" width="12" height="12" viewBox="0 0 12 12"><path d="M1 1L11 11M11 1L1 11" stroke="#000" stroke-width="1"/></svg>
<div style="left:154px;top:160px;width:749px;height:24px;background:linear-gradient(to right,#f0f0f0,#fafafa)"></div>
<div style="top:162px;font-size:12px;line-height:20px;color:#000;white-space:pre;left:169px;">File</div>
<div style="top:162px;font-size:12px;line-height:20px;color:#000;white-space:pre;left:206px;">Edit</div>
<div style="top:162px;font-size:12px;line-height:20px;color:#000;white-space:pre;left:245px;">Format-Filter-Sort</div>
<div style="top:162px;font-size:12px;line-height:20px;color:#6d6d6d;white-space:pre;letter-spacing:-0.35px;left:359px;">Select</div>
<div style="top:162px;font-size:12px;line-height:20px;color:#000;white-space:pre;letter-spacing:0.1px;left:409px;">Options</div>
<div style="top:186px;font-size:11px;line-height:20px;color:#000;white-space:pre;left:165px;">Units:</div>
<div style="top:186px;font-size:11px;line-height:20px;color:#000;white-space:pre;left:197px;">As Noted</div>
<div style="top:186px;font-size:11px;line-height:20px;color:#000;white-space:pre;letter-spacing:-0.28px;left:282px;">Hidden Columns:</div>
<div style="top:186px;font-size:11px;line-height:20px;color:#000;white-space:pre;left:368px;">Yes</div>
<div style="top:186px;font-size:11px;line-height:20px;color:#000;white-space:pre;left:422px;">Sort:</div>
<div style="top:186px;font-size:11px;line-height:20px;color:#000;white-space:pre;letter-spacing:-0.3px;left:451px;">None</div>
<div style="left:480px;top:185px;width:422px;height:22px;box-sizing:border-box;border:1px solid #adadad;background:#e1e1e1"></div>
<div style="top:186px;font-size:11px;line-height:20px;color:#000;white-space:pre;letter-spacing:-0.2px;left:484px;">Joint Displacements</div>
<svg style="left:889px;top:194px" width="8" height="5" viewBox="0 0 8 5"><path d="M0.4 0.6L4 4.1L7.6 0.6" fill="none" stroke="#404040" stroke-width="1.1"/></svg>
<div style="top:203px;font-size:11px;line-height:20px;color:#000;white-space:pre;left:165px;">Filter:</div>
<div style="top:203px;font-size:11px;line-height:20px;color:#000;white-space:pre;letter-spacing:-0.21px;left:197px;">([Output Case] = &#x27;NLDITH&#x27;) AND ([Case Type] = &#x27;NonDirHist&#x27;)</div>
<div style="left:161px;top:228px;width:742px;height:442px;background:#fff"></div>
<div style="left:162px;top:229px;width:740px;height:440px;box-sizing:border-box;border:1px solid #000;background:#fff"></div>
<div style="left:163px;top:230px;width:738px;height:1px;background:#a0a0a0"></div>
<div style="left:163px;top:230px;width:1px;height:438px;background:#a0a0a0"></div>
<div style="left:459px;top:232px;width:84px;height:33px;background:#d9ebf9"></div>
<div style="left:203px;top:232px;width:1px;height:33px;background:#a0a0a0"></div>
<div style="left:288px;top:232px;width:1px;height:33px;background:#e0e0e0"></div>
<div style="left:373px;top:232px;width:1px;height:33px;background:#e0e0e0"></div>
<div style="left:458px;top:232px;width:1px;height:33px;background:#e0e0e0"></div>
<div style="left:543px;top:232px;width:1px;height:33px;background:#e0e0e0"></div>
<div style="left:628px;top:232px;width:1px;height:33px;background:#e0e0e0"></div>
<div style="left:713px;top:232px;width:1px;height:33px;background:#e0e0e0"></div>
<div style="left:798px;top:232px;width:1px;height:33px;background:#e0e0e0"></div>
<div style="left:883px;top:232px;width:1px;height:33px;background:#e0e0e0"></div>
<div style="left:163px;top:265px;width:720px;height:1px;background:#a0a0a0"></div>
<div style="top:231px;font-size:11px;line-height:20px;color:#000;white-space:pre;font-weight:bold;left:204.5px;width:84px;text-align:center;">Story</div>
<div style="top:231px;font-size:11px;line-height:20px;color:#000;white-space:pre;font-weight:bold;left:289.5px;width:84px;text-align:center;">Label</div>
<div style="top:231px;font-size:11px;line-height:20px;color:#000;white-space:pre;font-weight:bold;left:374.5px;width:84px;text-align:center;">Output Case</div>
<div style="top:231px;font-size:11px;line-height:20px;color:#000;white-space:pre;font-weight:bold;left:459.5px;width:84px;text-align:center;">Case Type</div>
<div style="top:231px;font-size:11px;line-height:20px;color:#000;white-space:pre;font-weight:bold;left:544.5px;width:84px;text-align:center;">Step Type</div>
<div style="top:231px;font-size:11px;line-height:20px;color:#000;white-space:pre;font-weight:bold;left:629.5px;width:84px;text-align:center;">Uz</div>
<div style="top:245px;font-size:11px;line-height:20px;color:#000;white-space:pre;font-weight:bold;left:629.5px;width:84px;text-align:center;">in</div>
<div style="top:231px;font-size:11px;line-height:20px;color:#000;white-space:pre;font-weight:bold;left:714.5px;width:84px;text-align:center;">Rx</div>
<div style="top:245px;font-size:11px;line-height:20px;color:#000;white-space:pre;font-weight:bold;left:714.5px;width:84px;text-align:center;">rad</div>
<div style="top:231px;font-size:11px;line-height:20px;color:#000;white-space:pre;font-weight:bold;left:799.5px;width:84px;text-align:center;">Ry</div>
<div style="top:245px;font-size:11px;line-height:20px;color:#000;white-space:pre;font-weight:bold;left:799.5px;width:84px;text-align:center;">rad</div>
<div style="left:164px;top:287px;width:39px;height:1px;background:#e6e6e6"></div>
<div style="left:204px;top:287px;width:679px;height:1px;background:#a0a0a0"></div>
<div style="left:164px;top:309px;width:39px;height:1px;background:#e6e6e6"></div>
<div style="left:204px;top:309px;width:679px;height:1px;background:#a0a0a0"></div>
<div style="left:164px;top:331px;width:39px;height:1px;background:#e6e6e6"></div>
<div style="left:204px;top:331px;width:679px;height:1px;background:#a0a0a0"></div>
<div style="left:164px;top:353px;width:39px;height:1px;background:#e6e6e6"></div>
<div style="left:204px;top:353px;width:679px;height:1px;background:#a0a0a0"></div>
<div style="left:164px;top:375px;width:39px;height:1px;background:#e6e6e6"></div>
<div style="left:204px;top:375px;width:679px;height:1px;background:#a0a0a0"></div>
<div style="left:164px;top:397px;width:39px;height:1px;background:#e6e6e6"></div>
<div style="left:204px;top:397px;width:679px;height:1px;background:#a0a0a0"></div>
<div style="left:164px;top:419px;width:39px;height:1px;background:#e6e6e6"></div>
<div style="left:204px;top:419px;width:679px;height:1px;background:#a0a0a0"></div>
<div style="left:164px;top:441px;width:39px;height:1px;background:#e6e6e6"></div>
<div style="left:204px;top:441px;width:679px;height:1px;background:#a0a0a0"></div>
<div style="left:164px;top:463px;width:39px;height:1px;background:#e6e6e6"></div>
<div style="left:204px;top:463px;width:679px;height:1px;background:#a0a0a0"></div>
<div style="left:164px;top:485px;width:39px;height:1px;background:#e6e6e6"></div>
<div style="left:204px;top:485px;width:679px;height:1px;background:#a0a0a0"></div>
<div style="left:164px;top:507px;width:39px;height:1px;background:#e6e6e6"></div>
<div style="left:204px;top:507px;width:679px;height:1px;background:#a0a0a0"></div>
<div style="left:164px;top:529px;width:39px;height:1px;background:#e6e6e6"></div>
<div style="left:204px;top:529px;width:679px;height:1px;background:#a0a0a0"></div>
<div style="left:164px;top:551px;width:39px;height:1px;background:#e6e6e6"></div>
<div style="left:204px;top:551px;width:679px;height:1px;background:#a0a0a0"></div>
<div style="left:164px;top:573px;width:39px;height:1px;background:#e6e6e6"></div>
<div style="left:204px;top:573px;width:679px;height:1px;background:#a0a0a0"></div>
<div style="left:164px;top:595px;width:39px;height:1px;background:#e6e6e6"></div>
<div style="left:204px;top:595px;width:679px;height:1px;background:#a0a0a0"></div>
<div style="left:164px;top:617px;width:39px;height:1px;background:#e6e6e6"></div>
<div style="left:204px;top:617px;width:679px;height:1px;background:#a0a0a0"></div>
<div style="left:164px;top:639px;width:39px;height:1px;background:#e6e6e6"></div>
<div style="left:204px;top:639px;width:679px;height:1px;background:#a0a0a0"></div>
<div style="left:164px;top:661px;width:39px;height:1px;background:#e6e6e6"></div>
<div style="left:204px;top:661px;width:679px;height:1px;background:#a0a0a0"></div>
<div style="left:203px;top:266px;width:1px;height:401px;background:#a0a0a0"></div>
<div style="left:288px;top:266px;width:1px;height:401px;background:#a0a0a0"></div>
<div style="left:373px;top:266px;width:1px;height:401px;background:#a0a0a0"></div>
<div style="left:458px;top:266px;width:1px;height:401px;background:#a0a0a0"></div>
<div style="left:543px;top:266px;width:1px;height:401px;background:#a0a0a0"></div>
<div style="left:628px;top:266px;width:1px;height:401px;background:#a0a0a0"></div>
<div style="left:713px;top:266px;width:1px;height:401px;background:#a0a0a0"></div>
<div style="left:798px;top:266px;width:1px;height:401px;background:#a0a0a0"></div>
<div style="left:883px;top:266px;width:1px;height:401px;background:#a0a0a0"></div>
<div style="left:884px;top:231px;width:16px;height:436px;background:#f0f0f0"></div>
<div style="left:883px;top:231px;width:1px;height:34px;background:#fff"></div>
<div style="left:885px;top:247px;width:15px;height:17px;background:#cdcdcd"></div>
<svg style="left:888px;top:236px" width="9" height="7" viewBox="0 0 9 7"><path d="M1 5.5L4.5 2L8 5.5" fill="none" stroke="#606060" stroke-width="2"/></svg>
<svg style="left:888px;top:657px" width="9" height="7" viewBox="0 0 9 7"><path d="M1 1.5L4.5 5L8 1.5" fill="none" stroke="#606060" stroke-width="2"/></svg>
<svg style="left:170px;top:273px" width="6" height="10" viewBox="0 0 6 10"><path d="M0 0L5 4.5L0 9Z" fill="#404040"/></svg>
<div style="left:204px;top:266px;width:84px;height:21px;background:#0078d7"></div>
<div style="top:267px;font-size:11px;line-height:20px;color:#fff;white-space:pre;left:203.0px;width:84px;text-align:center;">Story4</div>
<div style="top:267px;font-size:11px;line-height:20px;color:#000;white-space:pre;left:288.0px;width:84px;text-align:center;">1</div>
<div style="top:267px;font-size:11px;line-height:20px;color:#000;white-space:pre;letter-spacing:-0.8px;left:373.0px;width:84px;text-align:center;">NLDITH</div>
<div style="top:267px;font-size:11px;line-height:20px;color:#000;white-space:pre;letter-spacing:-0.3px;left:458.0px;width:84px;text-align:center;">NonDirHist</div>
<div style="top:267px;font-size:11px;line-height:20px;color:#000;white-space:pre;letter-spacing:-0.3px;left:543.0px;width:84px;text-align:center;">Max</div>
<div style="top:267px;font-size:11px;line-height:20px;color:#000;white-space:pre;left:626px;width:84px;text-align:right;">0.001397</div>
<div style="top:267px;font-size:11px;line-height:20px;color:#000;white-space:pre;left:711px;width:84px;text-align:right;">1.1E-05</div>
<div style="top:267px;font-size:11px;line-height:20px;color:#000;white-space:pre;left:796px;width:84px;text-align:right;">0.002858</div>
<div style="top:289px;font-size:11px;line-height:20px;color:#000;white-space:pre;left:203.0px;width:84px;text-align:center;">Story4</div>
<div style="top:289px;font-size:11px;line-height:20px;color:#000;white-space:pre;left:288.0px;width:84px;text-align:center;">1</div>
<div style="top:289px;font-size:11px;line-height:20px;color:#000;white-space:pre;letter-spacing:-0.8px;left:373.0px;width:84px;text-align:center;">NLDITH</div>
<div style="top:289px;font-size:11px;line-height:20px;color:#000;white-space:pre;letter-spacing:-0.3px;left:458.0px;width:84px;text-align:center;">NonDirHist</div>
<div style="top:289px;font-size:11px;line-height:20px;color:#000;white-space:pre;letter-spacing:-0.3px;left:543.0px;width:84px;text-align:center;">Min</div>
<div style="top:289px;font-size:11px;line-height:20px;color:#000;white-space:pre;left:626px;width:84px;text-align:right;">-0.001339</div>
<div style="top:289px;font-size:11px;line-height:20px;color:#000;white-space:pre;left:711px;width:84px;text-align:right;">-1.9E-05</div>
<div style="top:289px;font-size:11px;line-height:20px;color:#000;white-space:pre;left:796px;width:84px;text-align:right;">-0.002998</div>
<div style="top:311px;font-size:11px;line-height:20px;color:#000;white-space:pre;left:203.0px;width:84px;text-align:center;">Story4</div>
<div style="top:311px;font-size:11px;line-height:20px;color:#000;white-space:pre;left:288.0px;width:84px;text-align:center;">2</div>
<div style="top:311px;font-size:11px;line-height:20px;color:#000;white-space:pre;letter-spacing:-0.8px;left:373.0px;width:84px;text-align:center;">NLDITH</div>
<div style="top:311px;font-size:11px;line-height:20px;color:#000;white-space:pre;letter-spacing:-0.3px;left:458.0px;width:84px;text-align:center;">NonDirHist</div>
<div style="top:311px;font-size:11px;line-height:20px;color:#000;white-space:pre;letter-spacing:-0.3px;left:543.0px;width:84px;text-align:center;">Max</div>
<div style="top:311px;font-size:11px;line-height:20px;color:#000;white-space:pre;left:626px;width:84px;text-align:right;">0.003996</div>
<div style="top:311px;font-size:11px;line-height:20px;color:#000;white-space:pre;left:711px;width:84px;text-align:right;">1.5E-05</div>
<div style="top:311px;font-size:11px;line-height:20px;color:#000;white-space:pre;left:796px;width:84px;text-align:right;">0.003996</div>
<div style="top:333px;font-size:11px;line-height:20px;color:#000;white-space:pre;left:203.0px;width:84px;text-align:center;">Story4</div>
<div style="top:333px;font-size:11px;line-height:20px;color:#000;white-space:pre;left:288.0px;width:84px;text-align:center;">2</div>
<div style="top:333px;font-size:11px;line-height:20px;color:#000;white-space:pre;letter-spacing:-0.8px;left:373.0px;width:84px;text-align:center;">NLDITH</div>
<div style="top:333px;font-size:11px;line-height:20px;color:#000;white-space:pre;letter-spacing:-0.3px;left:458.0px;width:84px;text-align:center;">NonDirHist</div>
<div style="top:333px;font-size:11px;line-height:20px;color:#000;white-space:pre;letter-spacing:-0.3px;left:543.0px;width:84px;text-align:center;">Min</div>
<div style="top:333px;font-size:11px;line-height:20px;color:#000;white-space:pre;left:626px;width:84px;text-align:right;">-0.004181</div>
<div style="top:333px;font-size:11px;line-height:20px;color:#000;white-space:pre;left:711px;width:84px;text-align:right;">-1.3E-05</div>
<div style="top:333px;font-size:11px;line-height:20px;color:#000;white-space:pre;left:796px;width:84px;text-align:right;">-0.004181</div>
<div style="top:355px;font-size:11px;line-height:20px;color:#000;white-space:pre;left:203.0px;width:84px;text-align:center;">Story4</div>
<div style="top:355px;font-size:11px;line-height:20px;color:#000;white-space:pre;left:288.0px;width:84px;text-align:center;">3</div>
<div style="top:355px;font-size:11px;line-height:20px;color:#000;white-space:pre;letter-spacing:-0.8px;left:373.0px;width:84px;text-align:center;">NLDITH</div>
<div style="top:355px;font-size:11px;line-height:20px;color:#000;white-space:pre;letter-spacing:-0.3px;left:458.0px;width:84px;text-align:center;">NonDirHist</div>
<div style="top:355px;font-size:11px;line-height:20px;color:#000;white-space:pre;letter-spacing:-0.3px;left:543.0px;width:84px;text-align:center;">Max</div>
<div style="top:355px;font-size:11px;line-height:20px;color:#000;white-space:pre;left:626px;width:84px;text-align:right;">0.003996</div>
<div style="top:355px;font-size:11px;line-height:20px;color:#000;white-space:pre;left:711px;width:84px;text-align:right;">1.3E-05</div>
<div style="top:355px;font-size:11px;line-height:20px;color:#000;white-space:pre;left:796px;width:84px;text-align:right;">0.003996</div>
<div style="top:377px;font-size:11px;line-height:20px;color:#000;white-space:pre;left:203.0px;width:84px;text-align:center;">Story4</div>
<div style="top:377px;font-size:11px;line-height:20px;color:#000;white-space:pre;left:288.0px;width:84px;text-align:center;">3</div>
<div style="top:377px;font-size:11px;line-height:20px;color:#000;white-space:pre;letter-spacing:-0.8px;left:373.0px;width:84px;text-align:center;">NLDITH</div>
<div style="top:377px;font-size:11px;line-height:20px;color:#000;white-space:pre;letter-spacing:-0.3px;left:458.0px;width:84px;text-align:center;">NonDirHist</div>
<div style="top:377px;font-size:11px;line-height:20px;color:#000;white-space:pre;letter-spacing:-0.3px;left:543.0px;width:84px;text-align:center;">Min</div>
<div style="top:377px;font-size:11px;line-height:20px;color:#000;white-space:pre;left:626px;width:84px;text-align:right;">-0.004181</div>
<div style="top:377px;font-size:11px;line-height:20px;color:#000;white-space:pre;left:711px;width:84px;text-align:right;">-1.5E-05</div>
<div style="top:377px;font-size:11px;line-height:20px;color:#000;white-space:pre;left:796px;width:84px;text-align:right;">-0.004181</div>
<div style="top:399px;font-size:11px;line-height:20px;color:#000;white-space:pre;left:203.0px;width:84px;text-align:center;">Story4</div>
<div style="top:399px;font-size:11px;line-height:20px;color:#000;white-space:pre;left:288.0px;width:84px;text-align:center;">4</div>
<div style="top:399px;font-size:11px;line-height:20px;color:#000;white-space:pre;letter-spacing:-0.8px;left:373.0px;width:84px;text-align:center;">NLDITH</div>
<div style="top:399px;font-size:11px;line-height:20px;color:#000;white-space:pre;letter-spacing:-0.3px;left:458.0px;width:84px;text-align:center;">NonDirHist</div>
<div style="top:399px;font-size:11px;line-height:20px;color:#000;white-space:pre;letter-spacing:-0.3px;left:543.0px;width:84px;text-align:center;">Max</div>
<div style="top:399px;font-size:11px;line-height:20px;color:#000;white-space:pre;left:626px;width:84px;text-align:right;">0.002858</div>
<div style="top:399px;font-size:11px;line-height:20px;color:#000;white-space:pre;left:711px;width:84px;text-align:right;">1.9E-05</div>
<div style="top:399px;font-size:11px;line-height:20px;color:#000;white-space:pre;left:796px;width:84px;text-align:right;">0.002858</div>
<div style="top:421px;font-size:11px;line-height:20px;color:#000;white-space:pre;left:203.0px;width:84px;text-align:center;">Story4</div>
<div style="top:421px;font-size:11px;line-height:20px;color:#000;white-space:pre;left:288.0px;width:84px;text-align:center;">4</div>
<div style="top:421px;font-size:11px;line-height:20px;color:#000;white-space:pre;letter-spacing:-0.8px;left:373.0px;width:84px;text-align:center;">NLDITH</div>
<div style="top:421px;font-size:11px;line-height:20px;color:#000;white-space:pre;letter-spacing:-0.3px;left:458.0px;width:84px;text-align:center;">NonDirHist</div>
<div style="top:421px;font-size:11px;line-height:20px;color:#000;white-space:pre;letter-spacing:-0.3px;left:543.0px;width:84px;text-align:center;">Min</div>
<div style="top:421px;font-size:11px;line-height:20px;color:#000;white-space:pre;left:626px;width:84px;text-align:right;">-0.002998</div>
<div style="top:421px;font-size:11px;line-height:20px;color:#000;white-space:pre;left:711px;width:84px;text-align:right;">-1.1E-05</div>
<div style="top:421px;font-size:11px;line-height:20px;color:#000;white-space:pre;left:796px;width:84px;text-align:right;">-0.002998</div>
<div style="top:443px;font-size:11px;line-height:20px;color:#000;white-space:pre;left:203.0px;width:84px;text-align:center;">Story4</div>
<div style="top:443px;font-size:11px;line-height:20px;color:#000;white-space:pre;left:288.0px;width:84px;text-align:center;">5</div>
<div style="top:443px;font-size:11px;line-height:20px;color:#000;white-space:pre;letter-spacing:-0.8px;left:373.0px;width:84px;text-align:center;">NLDITH</div>
<div style="top:443px;font-size:11px;line-height:20px;color:#000;white-space:pre;letter-spacing:-0.3px;left:458.0px;width:84px;text-align:center;">NonDirHist</div>
<div style="top:443px;font-size:11px;line-height:20px;color:#000;white-space:pre;letter-spacing:-0.3px;left:543.0px;width:84px;text-align:center;">Max</div>
<div style="top:443px;font-size:11px;line-height:20px;color:#000;white-space:pre;left:626px;width:84px;text-align:right;">0.00155</div>
<div style="top:443px;font-size:11px;line-height:20px;color:#000;white-space:pre;left:711px;width:84px;text-align:right;">1.3E-05</div>
<div style="top:443px;font-size:11px;line-height:20px;color:#000;white-space:pre;left:796px;width:84px;text-align:right;">0.00155</div>
<div style="top:465px;font-size:11px;line-height:20px;color:#000;white-space:pre;left:203.0px;width:84px;text-align:center;">Story4</div>
<div style="top:465px;font-size:11px;line-height:20px;color:#000;white-space:pre;left:288.0px;width:84px;text-align:center;">5</div>
<div style="top:465px;font-size:11px;line-height:20px;color:#000;white-space:pre;letter-spacing:-0.8px;left:373.0px;width:84px;text-align:center;">NLDITH</div>
<div style="top:465px;font-size:11px;line-height:20px;color:#000;white-space:pre;letter-spacing:-0.3px;left:458.0px;width:84px;text-align:center;">NonDirHist</div>
<div style="top:465px;font-size:11px;line-height:20px;color:#000;white-space:pre;letter-spacing:-0.3px;left:543.0px;width:84px;text-align:center;">Min</div>
<div style="top:465px;font-size:11px;line-height:20px;color:#000;white-space:pre;left:626px;width:84px;text-align:right;">-0.001631</div>
<div style="top:465px;font-size:11px;line-height:20px;color:#000;white-space:pre;left:711px;width:84px;text-align:right;">-1.3E-05</div>
<div style="top:465px;font-size:11px;line-height:20px;color:#000;white-space:pre;left:796px;width:84px;text-align:right;">-0.001631</div>
<div style="top:487px;font-size:11px;line-height:20px;color:#000;white-space:pre;left:203.0px;width:84px;text-align:center;">Story4</div>
<div style="top:487px;font-size:11px;line-height:20px;color:#000;white-space:pre;left:288.0px;width:84px;text-align:center;">6</div>
<div style="top:487px;font-size:11px;line-height:20px;color:#000;white-space:pre;letter-spacing:-0.8px;left:373.0px;width:84px;text-align:center;">NLDITH</div>
<div style="top:487px;font-size:11px;line-height:20px;color:#000;white-space:pre;letter-spacing:-0.3px;left:458.0px;width:84px;text-align:center;">NonDirHist</div>
<div style="top:487px;font-size:11px;line-height:20px;color:#000;white-space:pre;letter-spacing:-0.3px;left:543.0px;width:84px;text-align:center;">Max</div>
<div style="top:487px;font-size:11px;line-height:20px;color:#000;white-space:pre;left:626px;width:84px;text-align:right;">0.002426</div>
<div style="top:487px;font-size:11px;line-height:20px;color:#000;white-space:pre;left:711px;width:84px;text-align:right;">1.9E-05</div>
<div style="top:487px;font-size:11px;line-height:20px;color:#000;white-space:pre;left:796px;width:84px;text-align:right;">0.002426</div>
<div style="top:509px;font-size:11px;line-height:20px;color:#000;white-space:pre;left:203.0px;width:84px;text-align:center;">Story4</div>
<div style="top:509px;font-size:11px;line-height:20px;color:#000;white-space:pre;left:288.0px;width:84px;text-align:center;">6</div>
<div style="top:509px;font-size:11px;line-height:20px;color:#000;white-space:pre;letter-spacing:-0.8px;left:373.0px;width:84px;text-align:center;">NLDITH</div>
<div style="top:509px;font-size:11px;line-height:20px;color:#000;white-space:pre;letter-spacing:-0.3px;left:458.0px;width:84px;text-align:center;">NonDirHist</div>
<div style="top:509px;font-size:11px;line-height:20px;color:#000;white-space:pre;letter-spacing:-0.3px;left:543.0px;width:84px;text-align:center;">Min</div>
<div style="top:509px;font-size:11px;line-height:20px;color:#000;white-space:pre;left:626px;width:84px;text-align:right;">-0.002548</div>
<div style="top:509px;font-size:11px;line-height:20px;color:#000;white-space:pre;left:711px;width:84px;text-align:right;">-2E-05</div>
<div style="top:509px;font-size:11px;line-height:20px;color:#000;white-space:pre;left:796px;width:84px;text-align:right;">-0.002548</div>
<div style="top:531px;font-size:11px;line-height:20px;color:#000;white-space:pre;left:203.0px;width:84px;text-align:center;">Story4</div>
<div style="top:531px;font-size:11px;line-height:20px;color:#000;white-space:pre;left:288.0px;width:84px;text-align:center;">7</div>
<div style="top:531px;font-size:11px;line-height:20px;color:#000;white-space:pre;letter-spacing:-0.8px;left:373.0px;width:84px;text-align:center;">NLDITH</div>
<div style="top:531px;font-size:11px;line-height:20px;color:#000;white-space:pre;letter-spacing:-0.3px;left:458.0px;width:84px;text-align:center;">NonDirHist</div>
<div style="top:531px;font-size:11px;line-height:20px;color:#000;white-space:pre;letter-spacing:-0.3px;left:543.0px;width:84px;text-align:center;">Max</div>
<div style="top:531px;font-size:11px;line-height:20px;color:#000;white-space:pre;left:626px;width:84px;text-align:right;">0.001397</div>
<div style="top:531px;font-size:11px;line-height:20px;color:#000;white-space:pre;left:711px;width:84px;text-align:right;">2E-05</div>
<div style="top:531px;font-size:11px;line-height:20px;color:#000;white-space:pre;left:796px;width:84px;text-align:right;">0.002426</div>
<div style="top:553px;font-size:11px;line-height:20px;color:#000;white-space:pre;left:203.0px;width:84px;text-align:center;">Story4</div>
<div style="top:553px;font-size:11px;line-height:20px;color:#000;white-space:pre;left:288.0px;width:84px;text-align:center;">7</div>
<div style="top:553px;font-size:11px;line-height:20px;color:#000;white-space:pre;letter-spacing:-0.8px;left:373.0px;width:84px;text-align:center;">NLDITH</div>
<div style="top:553px;font-size:11px;line-height:20px;color:#000;white-space:pre;letter-spacing:-0.3px;left:458.0px;width:84px;text-align:center;">NonDirHist</div>
<div style="top:553px;font-size:11px;line-height:20px;color:#000;white-space:pre;letter-spacing:-0.3px;left:543.0px;width:84px;text-align:center;">Min</div>
<div style="top:553px;font-size:11px;line-height:20px;color:#000;white-space:pre;left:626px;width:84px;text-align:right;">-0.001339</div>
<div style="top:553px;font-size:11px;line-height:20px;color:#000;white-space:pre;left:711px;width:84px;text-align:right;">-1.9E-05</div>
<div style="top:553px;font-size:11px;line-height:20px;color:#000;white-space:pre;left:796px;width:84px;text-align:right;">-0.002548</div>
<div style="top:575px;font-size:11px;line-height:20px;color:#000;white-space:pre;left:203.0px;width:84px;text-align:center;">Story4</div>
<div style="top:575px;font-size:11px;line-height:20px;color:#000;white-space:pre;left:288.0px;width:84px;text-align:center;">8</div>
<div style="top:575px;font-size:11px;line-height:20px;color:#000;white-space:pre;letter-spacing:-0.8px;left:373.0px;width:84px;text-align:center;">NLDITH</div>
<div style="top:575px;font-size:11px;line-height:20px;color:#000;white-space:pre;letter-spacing:-0.3px;left:458.0px;width:84px;text-align:center;">NonDirHist</div>
<div style="top:575px;font-size:11px;line-height:20px;color:#000;white-space:pre;letter-spacing:-0.3px;left:543.0px;width:84px;text-align:center;">Max</div>
<div style="top:575px;font-size:11px;line-height:20px;color:#000;white-space:pre;left:626px;width:84px;text-align:right;">0.0117</div>
<div style="top:575px;font-size:11px;line-height:20px;color:#000;white-space:pre;left:711px;width:84px;text-align:right;">1.3E-05</div>
<div style="top:575px;font-size:11px;line-height:20px;color:#000;white-space:pre;left:796px;width:84px;text-align:right;">0.00155</div>
<div style="top:597px;font-size:11px;line-height:20px;color:#000;white-space:pre;left:203.0px;width:84px;text-align:center;">Story4</div>
<div style="top:597px;font-size:11px;line-height:20px;color:#000;white-space:pre;left:288.0px;width:84px;text-align:center;">8</div>
<div style="top:597px;font-size:11px;line-height:20px;color:#000;white-space:pre;letter-spacing:-0.8px;left:373.0px;width:84px;text-align:center;">NLDITH</div>
<div style="top:597px;font-size:11px;line-height:20px;color:#000;white-space:pre;letter-spacing:-0.3px;left:458.0px;width:84px;text-align:center;">NonDirHist</div>
<div style="top:597px;font-size:11px;line-height:20px;color:#000;white-space:pre;letter-spacing:-0.3px;left:543.0px;width:84px;text-align:center;">Min</div>
<div style="top:597px;font-size:11px;line-height:20px;color:#000;white-space:pre;left:626px;width:84px;text-align:right;">-0.011061</div>
<div style="top:597px;font-size:11px;line-height:20px;color:#000;white-space:pre;left:711px;width:84px;text-align:right;">-1.3E-05</div>
<div style="top:597px;font-size:11px;line-height:20px;color:#000;white-space:pre;left:796px;width:84px;text-align:right;">-0.001631</div>
<div style="top:619px;font-size:11px;line-height:20px;color:#000;white-space:pre;left:203.0px;width:84px;text-align:center;">Story4</div>
<div style="top:619px;font-size:11px;line-height:20px;color:#000;white-space:pre;left:288.0px;width:84px;text-align:center;">9</div>
<div style="top:619px;font-size:11px;line-height:20px;color:#000;white-space:pre;letter-spacing:-0.8px;left:373.0px;width:84px;text-align:center;">NLDITH</div>
<div style="top:619px;font-size:11px;line-height:20px;color:#000;white-space:pre;letter-spacing:-0.3px;left:458.0px;width:84px;text-align:center;">NonDirHist</div>
<div style="top:619px;font-size:11px;line-height:20px;color:#000;white-space:pre;letter-spacing:-0.3px;left:543.0px;width:84px;text-align:center;">Max</div>
<div style="top:619px;font-size:11px;line-height:20px;color:#000;white-space:pre;left:626px;width:84px;text-align:right;">0.011061</div>
<div style="top:619px;font-size:11px;line-height:20px;color:#000;white-space:pre;left:711px;width:84px;text-align:right;">1.3E-05</div>
<div style="top:619px;font-size:11px;line-height:20px;color:#000;white-space:pre;left:796px;width:84px;text-align:right;">0.00155</div>
<div style="top:641px;font-size:11px;line-height:20px;color:#000;white-space:pre;left:203.0px;width:84px;text-align:center;">Story4</div>
<div style="top:641px;font-size:11px;line-height:20px;color:#000;white-space:pre;left:288.0px;width:84px;text-align:center;">9</div>
<div style="top:641px;font-size:11px;line-height:20px;color:#000;white-space:pre;letter-spacing:-0.8px;left:373.0px;width:84px;text-align:center;">NLDITH</div>
<div style="top:641px;font-size:11px;line-height:20px;color:#000;white-space:pre;letter-spacing:-0.3px;left:458.0px;width:84px;text-align:center;">NonDirHist</div>
<div style="top:641px;font-size:11px;line-height:20px;color:#000;white-space:pre;letter-spacing:-0.3px;left:543.0px;width:84px;text-align:center;">Min</div>
<div style="top:641px;font-size:11px;line-height:20px;color:#000;white-space:pre;left:626px;width:84px;text-align:right;">-0.0117</div>
<div style="top:641px;font-size:11px;line-height:20px;color:#000;white-space:pre;left:711px;width:84px;text-align:right;">-1.3E-05</div>
<div style="top:641px;font-size:11px;line-height:20px;color:#000;white-space:pre;left:796px;width:84px;text-align:right;">-0.001631</div>
<div style="top:679px;font-size:11px;line-height:20px;color:#000;white-space:pre;left:166px;">Record:</div>
<div style="left:216px;top:679px;width:34px;height:21px;box-sizing:border-box;border:1px solid #adadad;background:#e1e1e1"></div>
<div style="top:679px;font-size:11px;line-height:20px;color:#000;white-space:pre;left:216.0px;width:34px;text-align:center;"></div>
<div style="left:253px;top:679px;width:27px;height:21px;box-sizing:border-box;border:1px solid #adadad;background:#e1e1e1"></div>
<div style="top:679px;font-size:11px;line-height:20px;color:#000;white-space:pre;left:253.0px;width:27px;text-align:center;"></div>
<svg style="left:226px;top:686.5px" width="6" height="8" viewBox="0 0 6 8"><path d="M5.2 0.8L0.9 3.9L5.2 7" fill="none" stroke="#1a1a1a" stroke-width="0.95"/></svg>
<svg style="left:232.5px;top:686.5px" width="6" height="8" viewBox="0 0 6 8"><path d="M5.2 0.8L0.9 3.9L5.2 7" fill="none" stroke="#1a1a1a" stroke-width="0.95"/></svg>
<svg style="left:263px;top:686.5px" width="6" height="8" viewBox="0 0 6 8"><path d="M5.2 0.8L0.9 3.9L5.2 7" fill="none" stroke="#1a1a1a" stroke-width="0.95"/></svg>
<div style="left:283px;top:682px;width:59px;height:13px;background:#fff"></div>
<div style="top:679px;font-size:11px;line-height:20px;color:#000;white-space:pre;left:283.0px;width:59px;text-align:center;">1</div>
<div style="left:344px;top:679px;width:27px;height:21px;box-sizing:border-box;border:1px solid #adadad;background:#e1e1e1"></div>
<div style="top:679px;font-size:11px;line-height:20px;color:#000;white-space:pre;left:344.0px;width:27px;text-align:center;"></div>
<div style="left:373px;top:679px;width:34px;height:21px;box-sizing:border-box;border:1px solid #adadad;background:#e1e1e1"></div>
<div style="top:679px;font-size:11px;line-height:20px;color:#000;white-space:pre;left:373.0px;width:34px;text-align:center;"></div>
<svg style="left:354px;top:686.5px" width="6" height="8" viewBox="0 0 6 8"><path d="M0.8 0.8L5.1 3.9L0.8 7" fill="none" stroke="#1a1a1a" stroke-width="0.95"/></svg>
<svg style="left:383px;top:686.5px" width="6" height="8" viewBox="0 0 6 8"><path d="M0.8 0.8L5.1 3.9L0.8 7" fill="none" stroke="#1a1a1a" stroke-width="0.95"/></svg>
<svg style="left:389.5px;top:686.5px" width="6" height="8" viewBox="0 0 6 8"><path d="M0.8 0.8L5.1 3.9L0.8 7" fill="none" stroke="#1a1a1a" stroke-width="0.95"/></svg>
<div style="top:679px;font-size:11px;line-height:20px;color:#000;white-space:pre;left:413px;">of 552</div>
<div style="left:649px;top:679px;width:112px;height:21px;box-sizing:border-box;border:1px solid #adadad;background:#e1e1e1"></div>
<div style="top:679px;font-size:11px;line-height:20px;color:#000;white-space:pre;left:649.0px;width:112px;text-align:center;">Add Tables...</div>
<div style="left:805px;top:679px;width:71px;height:21px;box-sizing:border-box;border:1px solid #adadad;background:#e1e1e1"></div>
<div style="top:679px;font-size:11px;line-height:20px;color:#000;white-space:pre;left:805.0px;width:71px;text-align:center;">Done</div>
<div style="left:894px;top:710px;width:2px;height:2px;background:#fff"></div>
<div style="left:893px;top:709px;width:2px;height:2px;background:#b0b0b0"></div>
<div style="left:897px;top:710px;width:2px;height:2px;background:#fff"></div>
<div style="left:896px;top:709px;width:2px;height:2px;background:#b0b0b0"></div>
<div style="left:900px;top:710px;width:2px;height:2px;background:#fff"></div>
<div style="left:899px;top:709px;width:2px;height:2px;background:#b0b0b0"></div>
<div style="left:897px;top:707px;width:2px;height:2px;background:#fff"></div>
<div style="left:896px;top:706px;width:2px;height:2px;background:#b0b0b0"></div>
<div style="left:900px;top:707px;width:2px;height:2px;background:#fff"></div>
<div style="left:899px;top:706px;width:2px;height:2px;background:#b0b0b0"></div>
<div style="left:900px;top:704px;width:2px;height:2px;background:#fff"></div>
<div style="left:899px;top:703px;width:2px;height:2px;background:#b0b0b0"></div>
<div style="left:509px;top:246px;width:254px;height:295px;box-sizing:border-box;border:1px solid #7a7a7a;background:#fcfcfc;box-shadow:3px 3px 3px -1px rgba(0,0,0,0.55)"></div>
<div style="left:510px;top:247px;width:24px;height:293px;background:linear-gradient(to right,#fafafa,#f0f0f0)"></div>
<div style="top:250px;font-size:12px;line-height:20px;color:#000;white-space:pre;left:546px;">Filter:</div>
<div style="left:582px;top:252px;width:150px;height:108px;box-sizing:border-box;border:1px solid #828790;background:#fff"></div>
<div style="left:584px;top:280px;width:146px;height:13px;background:#0078d7"></div>
<div style="top:251px;font-size:11px;line-height:20px;color:#000;white-space:pre;letter-spacing:-0.35px;left:586px;">LinModEigen</div>
<div style="top:264px;font-size:11px;line-height:20px;color:#000;white-space:pre;letter-spacing:-0.35px;left:586px;">LinStatic</div>
<div style="top:277px;font-size:11px;line-height:20px;color:#fff;white-space:pre;letter-spacing:-0.35px;left:586px;">NonDirHist</div>
<div style="top:290px;font-size:11px;line-height:20px;color:#000;white-space:pre;letter-spacing:-0.35px;left:586px;">{Non-blanks}</div>
<div style="left:583px;top:363px;width:149px;height:20px;box-sizing:border-box;border:1px solid #bfbfbf;background:#cccccc"></div>
<div style="top:364px;font-size:12px;line-height:20px;color:#555555;white-space:pre;letter-spacing:0.2px;left:589px;">Apply Multiple Item Filter</div>
<div style="left:542px;top:392px;width:219px;height:1px;background:#bdbdbd"></div>
<div style="left:542px;top:442px;width:219px;height:1px;background:#bdbdbd"></div>
<div style="left:542px;top:514px;width:219px;height:1px;background:#bdbdbd"></div>
<div style="top:396px;font-size:12px;line-height:20px;color:#000;white-space:pre;letter-spacing:-0.1px;left:545px;">Clear Filter</div>
<div style="top:418px;font-size:12px;line-height:20px;color:#000;white-space:pre;letter-spacing:-0.1px;left:545px;">Clear All Filters</div>
<div style="top:446px;font-size:12px;line-height:20px;color:#000;white-space:pre;letter-spacing:-0.1px;left:545px;">Sort Ascending</div>
<div style="top:468px;font-size:12px;line-height:20px;color:#000;white-space:pre;letter-spacing:-0.1px;left:545px;">Sort Descending</div>
<div style="top:490px;font-size:12px;line-height:20px;color:#000;white-space:pre;letter-spacing:-0.1px;left:545px;">Clear Sort</div>
<div style="top:518px;font-size:12px;line-height:20px;color:#000;white-space:pre;letter-spacing:-0.1px;left:545px;">Show Description...</div>
<svg style="left:680px;top:285px" width="14" height="21" viewBox="0 0 14 21"><path d="M1.5 1.5V17.5L5.3 13.9L8.2 19.8L10.4 18.8L7.6 12.9H12.8Z" fill="#fff" stroke="#000" stroke-width="1" stroke-linejoin="miter"/></svg>
</body></html>
